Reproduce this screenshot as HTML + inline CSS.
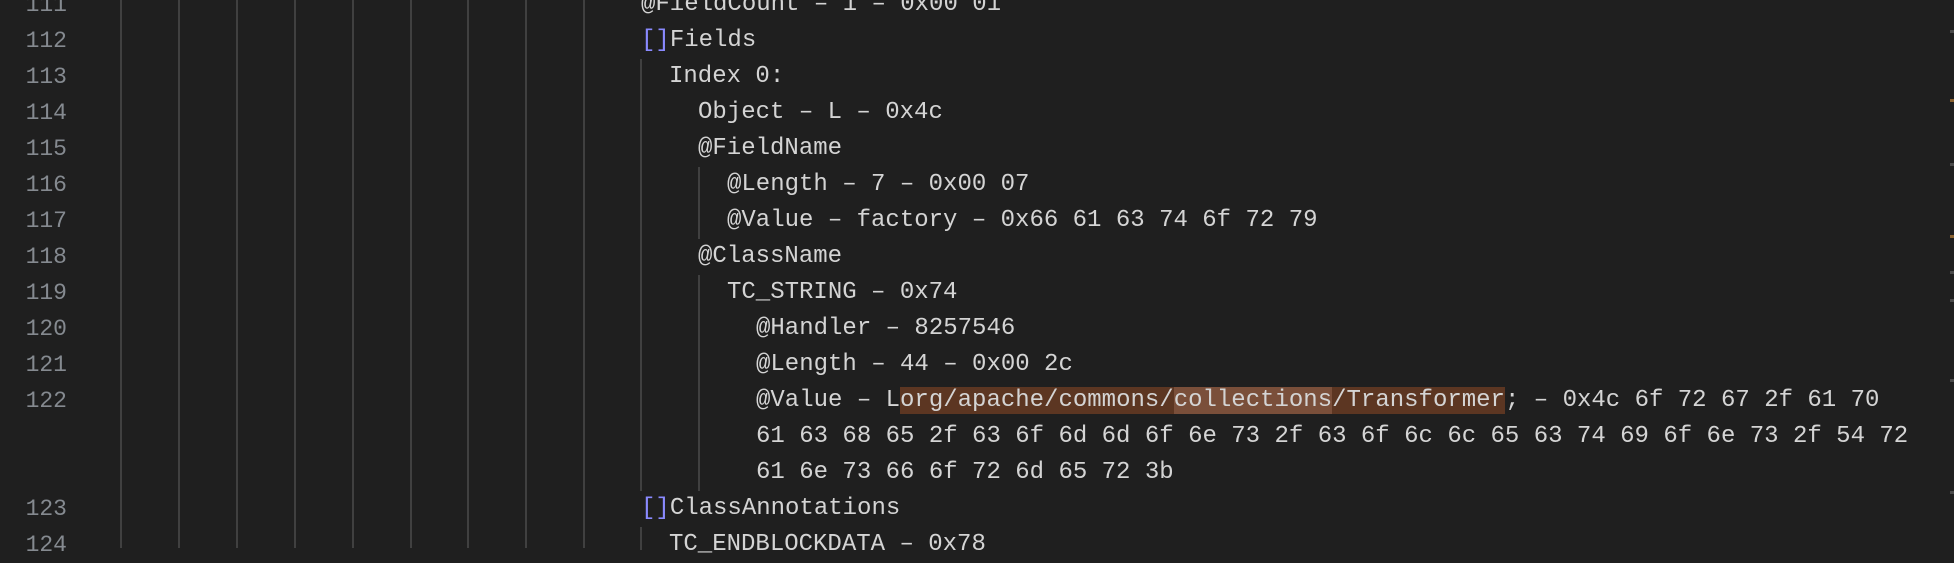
<!DOCTYPE html>
<html><head><meta charset="utf-8"><style>
html,body{margin:0;padding:0}
body{width:1954px;height:548px;background:#1f1f1f;overflow:hidden;position:relative;font-family:"Liberation Mono",monospace;font-size:24px;}
.r{position:absolute;height:36px;line-height:36px;white-space:pre;color:#d4d4d4}
.n{position:absolute;left:0;width:67px;text-align:right;height:36px;line-height:36px;color:#858a90;font-size:23px}
.g{position:absolute;width:2px;background:#404040}
.b{color:#8a8aff}
.hl{background:#5c3622}
.hl2{background:#7a4f3a}
.m{position:absolute;left:1950px;width:4px;height:3px;background:#4a4a4a}
</style></head><body>
<div class="g" style="left:120px;top:0;height:548px"></div>
<div class="g" style="left:178px;top:0;height:548px"></div>
<div class="g" style="left:236px;top:0;height:548px"></div>
<div class="g" style="left:294px;top:0;height:548px"></div>
<div class="g" style="left:352px;top:0;height:548px"></div>
<div class="g" style="left:410px;top:0;height:548px"></div>
<div class="g" style="left:467px;top:0;height:548px"></div>
<div class="g" style="left:525px;top:0;height:548px"></div>
<div class="g" style="left:583px;top:0;height:548px"></div>
<div class="g" style="left:640px;top:59px;height:432px"></div>
<div class="g" style="left:640px;top:527px;height:23px"></div>
<div class="g" style="left:698px;top:167px;height:72px"></div>
<div class="g" style="left:698px;top:275px;height:216px"></div>

<div class="n" style="top:-13px">111</div>
<div class="n" style="top:23px">112</div>
<div class="n" style="top:59px">113</div>
<div class="n" style="top:95px">114</div>
<div class="n" style="top:131px">115</div>
<div class="n" style="top:167px">116</div>
<div class="n" style="top:203px">117</div>
<div class="n" style="top:239px">118</div>
<div class="n" style="top:275px">119</div>
<div class="n" style="top:311px">120</div>
<div class="n" style="top:347px">121</div>
<div class="n" style="top:383px">122</div>
<div class="n" style="top:491px">123</div>
<div class="n" style="top:527px">124</div>

<div class="r" style="top:-13px;left:641px">@FieldCount – 1 – 0x00 01</div>
<div class="r" style="top:23px;left:641px"><span class="b">[]</span>Fields</div>
<div class="r" style="top:59px;left:669px">Index 0:</div>
<div class="r" style="top:95px;left:698px">Object – L – 0x4c</div>
<div class="r" style="top:131px;left:698px">@FieldName</div>
<div class="r" style="top:167px;left:727px">@Length – 7 – 0x00 07</div>
<div class="r" style="top:203px;left:727px">@Value – factory – 0x66 61 63 74 6f 72 79</div>
<div class="r" style="top:239px;left:698px">@ClassName</div>
<div class="r" style="top:275px;left:727px">TC_STRING – 0x74</div>
<div class="r" style="top:311px;left:756px">@Handler – 8257546</div>
<div class="r" style="top:347px;left:756px">@Length – 44 – 0x00 2c</div>
<div class="r" style="top:383px;left:756px">@Value – L<span class="hl">org/apache/commons/</span><span class="hl2">collections</span><span class="hl">/Transformer</span>; – 0x4c 6f 72 67 2f 61 70</div>
<div class="r" style="top:419px;left:756px">61 63 68 65 2f 63 6f 6d 6d 6f 6e 73 2f 63 6f 6c 6c 65 63 74 69 6f 6e 73 2f 54 72</div>
<div class="r" style="top:455px;left:756px">61 6e 73 66 6f 72 6d 65 72 3b</div>
<div class="r" style="top:491px;left:641px"><span class="b">[]</span>ClassAnnotations</div>
<div class="r" style="top:527px;left:669px">TC_ENDBLOCKDATA – 0x78</div>

<div class="m" style="top:30px"></div>
<div class="m" style="top:99px;background:#8a6230"></div>
<div class="m" style="top:163px"></div>
<div class="m" style="top:235px;background:#8a6230"></div>
<div class="m" style="top:271px"></div>
<div class="m" style="top:299px"></div>
<div class="m" style="top:379px"></div>
<div class="m" style="top:491px"></div>
</body></html>
